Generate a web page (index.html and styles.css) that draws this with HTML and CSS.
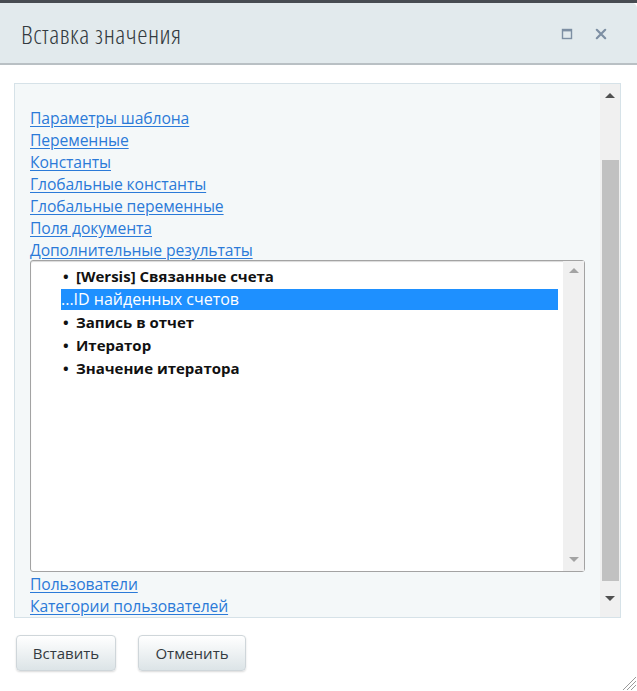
FILE: index.html
```html
<!DOCTYPE html>
<html lang="ru">
<head>
<meta charset="utf-8">
<link rel="stylesheet" href="styles.css">
</head>
<body>
<div class="topstrip"></div>
<div class="dialog">
  <div class="titlebar">
    <div class="title">Вставка значения</div>
    <div class="tools">
      <svg class="ico" width="12" height="12" viewBox="0 0 12 12"><rect x="1.5" y="1.5" width="9" height="9" fill="none" stroke="#7d8fa3" stroke-width="1.4"/><line x1="1.5" y1="2.6" x2="10.5" y2="2.6" stroke="#7d8fa3" stroke-width="1.6"/></svg>
      <svg class="ico" width="12" height="12" viewBox="0 0 12 12"><path d="M1.8 1.8 L10.2 10.2 M10.2 1.8 L1.8 10.2" stroke="#7d8fa3" stroke-width="2.2" stroke-linecap="round"/></svg>
    </div>
  </div>
  <div class="body">
    <div class="panel">
      <div class="content">
        <a class="link" href="#">Параметры шаблона</a>
        <a class="link" href="#">Переменные</a>
        <a class="link" href="#">Константы</a>
        <a class="link" href="#">Глобальные константы</a>
        <a class="link" href="#">Глобальные переменные</a>
        <a class="link" href="#">Поля документа</a>
        <a class="link" href="#">Дополнительные результаты</a>
        <div class="listbox">
          <div class="items">
            <div class="item"><span class="bullet">•</span>[Wersis] Связанные счета</div>
            <div class="item selected">...ID найденных счетов</div>
            <div class="item"><span class="bullet">•</span>Запись в отчет</div>
            <div class="item"><span class="bullet">•</span>Итератор</div>
            <div class="item"><span class="bullet">•</span>Значение итератора</div>
          </div>
          <div class="sb sb-inner">
            <span class="arr up light"></span>
            <span class="arr down light"></span>
          </div>
        </div>
        <a class="link" href="#">Пользователи</a>
        <a class="link" href="#">Категории пользователей</a>
      </div>
      <div class="sb sb-outer">
        <span class="arr up"></span>
        <div class="thumb"></div>
        <span class="arr down"></span>
      </div>
    </div>
    <div class="buttons">
      <button class="btn btn-insert">Вставить</button>
      <button class="btn btn-cancel">Отменить</button>
    </div>
  </div>
  <svg class="grip" width="18" height="18" viewBox="0 0 18 18"><path d="M17 4 L4 17 M17 8 L8 17 M17 12 L12 17" stroke="#9a9a9a" stroke-width="1"/></svg>
</div>
</body>
</html>
```
FILE: styles.css
```css
* { box-sizing: border-box; }
html, body { margin: 0; padding: 0; }
body {
  width: 637px;
  height: 691px;
  overflow: hidden;
  background: #ffffff;
  font-family: "Open Sans", "Noto Sans", sans-serif;
  position: relative;
}
.topstrip {
  height: 3px;
  background: #474c52;
}
.dialog {
  height: 688px;
  background: #ffffff;
  border-top-right-radius: 5px;
  position: relative;
}
.titlebar {
  height: 62px;
  background: #e2eaed;
  border-bottom: 2px solid #b9c0c4;
  border-top-right-radius: 5px;
  display: flex;
  align-items: center;
  padding: 2px 0 0 21px;
}
.title {
  font-size: 26px;
  font-weight: 300;
  font-stretch: 75%;
  letter-spacing: 0.5px;
  color: #333a40;
  flex: 1;
}
.tools {
  display: flex;
  gap: 22px;
  padding-right: 30px;
  padding-bottom: 1px;
}
.ico { display: block; }
.body {
  padding: 18px 16px 0 14px;
}
.panel {
  height: 535px;
  width: 607px;
  border: 1px solid #d6e2e8;
  background: #f4f8f9;
  display: flex;
}
.content {
  flex: 1;
  padding: 23px 0 0 15px;
  display: flex;
  flex-direction: column;
  align-items: flex-start;
  overflow: hidden;
}
.link {
  font-size: 15.7px;
  line-height: 22px;
  color: #2b7ad8;
  text-decoration: underline;
  text-underline-offset: 2px;
  letter-spacing: -0.1px;
}
.listbox {
  width: 555px;
  height: 315px;
  margin: -1px 0 1px 0;
  border: 1px solid #a3a3a3;
  border-radius: 3px;
  background: #ffffff;
  display: flex;
  box-shadow: inset 0 1px 1px rgba(0,0,0,0.15);
}
.items {
  flex: 1;
  padding: 5px 5px 0 30px;
}
.item {
  font-size: 15px;
  font-weight: 700;
  line-height: 21px;
  margin: 0 0 2px 0;
  color: #111;
  padding-left: 2px;
  white-space: nowrap;
}
.bullet {
  display: inline-block;
  width: 13px;
}
.item.selected {
  background: #1e90ff;
  color: #ffffff;
  font-weight: 400;
  font-size: 16px;
  padding-left: 0;
}
.sb {
  background: #f0f0f0;
  display: flex;
  flex-direction: column;
  align-items: center;
}
.sb-inner {
  width: 21px;
  justify-content: space-between;
  padding: 7px 0 9px;
}
.sb-outer {
  width: 20px;
  padding: 9px 0 9px;
}
.thumb {
  width: 17px;
  height: 421px;
  background: #c1c1c1;
  margin: 62px 0 15px;
}
.arr {
  width: 0;
  height: 0;
  border-left: 5px solid transparent;
  border-right: 5px solid transparent;
}
.arr.up { border-bottom: 5px solid #505050; }
.arr.down { border-top: 5px solid #505050; }
.arr.light.up { border-bottom-color: #a3a3a3; }
.arr.light.down { border-top-color: #a3a3a3; }
.buttons {
  display: flex;
  gap: 22px;
  padding: 17px 0 0 2px;
}
.btn {
  height: 36px;
  padding: 0 8px;
  font-family: "Open Sans", "Noto Sans", sans-serif;
  font-size: 15px;
  color: #333a40;
  background: linear-gradient(#ffffff, #dce4e7);
  border: 1px solid #cfd6da;
  border-radius: 4px;
  box-shadow: 0 1px 2px rgba(0,0,0,0.15);
}
.btn-insert { width: 100px; }
.btn-cancel { width: 108px; }
.grip {
  position: absolute;
  right: 0;
  bottom: 0;
}
```
